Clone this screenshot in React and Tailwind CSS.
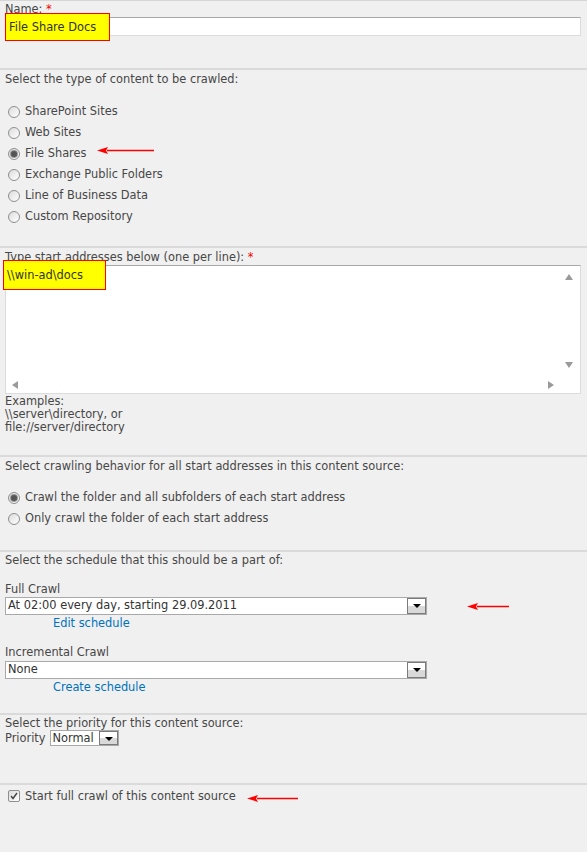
import React from "react";

function Radio({ checked, label }) {
	return (
		<div className="flex h-[21px] items-center pl-[3px]">
			<span className="flex h-[12px] w-[12px] items-center justify-center rounded-full border border-[#8e8f8f] bg-gradient-to-br from-[#dcdcdc] to-white">
				{checked && <span className="h-[6px] w-[6px] rounded-full bg-[#555] ring-1 ring-[#999]" />}
			</span>
			<span className="ml-[5px]">{label}</span>
		</div>
	);
}

function Select({ value, className }) {
	return (
		<div className={`flex items-stretch border border-[#a9a9a9] bg-white ${className}`}>
			<span className="flex-1 overflow-hidden whitespace-nowrap pl-[2px] leading-[15px] text-[#333]">{value}</span>
			<span className="relative w-[19px] border border-[#7a7a7a] bg-[linear-gradient(#fff_50%,#d9d9d9_50%)]">
				<svg className="absolute left-[5px] top-[5px]" width="8" height="4" viewBox="0 0 8 4">
					<path d="M0 0 H8 L4 4 Z" fill="#000" />
				</svg>
			</span>
		</div>
	);
}

function RedArrow({ className, length }) {
	return (
		<svg className={`absolute ${className}`} width={length} height="9" viewBox={`0 0 ${length} 9`}>
			<path d={`M10 4.5 H${length}`} stroke="#ff0000" strokeWidth="1.5" />
			<path d="M0 4.5 L11 1 L9 4.5 L11 8 Z" fill="#ff0000" />
		</svg>
	);
}

export default function App() {
	return (
		<div className="relative w-[587px] bg-white font-['DejaVu_Sans',Verdana,sans-serif] text-[11.4px] leading-[13px] text-[#474747]">
			<div className="bg-[#f0f0f0]">
				{/* Name */}
				<div className="h-[68px] border-t border-[#d6d6d6] px-[5px] pt-[2px]">
					<div>
						Name: <span className="text-[#e00]">*</span>
					</div>
					<div className="relative mt-[1px] h-[19px] w-[576px] border border-[#dcdcdc] border-t-[#a8a8a8] bg-white">
						<div className="absolute -left-[1px] -top-[5px] flex h-[28px] w-[105px] items-center border border-[#ff0000] bg-[#ffff00] pl-[3px] text-[#333]">
							File Share Docs
						</div>
					</div>
				</div>

				{/* Content type */}
				<div className="h-[178px] border-t-2 border-[#dadada] px-[5px] pt-[3px]">
					<div>Select the type of content to be crawled:</div>
					<div className="mt-[15px]">
						<Radio label="SharePoint Sites" />
						<Radio label="Web Sites" />
						<Radio checked label="File Shares" />
						<Radio label="Exchange Public Folders" />
						<Radio label="Line of Business Data" />
						<Radio label="Custom Repository" />
					</div>
				</div>

				{/* Start addresses */}
				<div className="h-[209px] border-t-2 border-[#dadada] px-[5px] pt-[3px]">
					<div>
						Type start addresses below (one per line): <span className="text-[#e00]">*</span>
					</div>
					<div className="relative mt-[1px] h-[129px] w-[576px] border border-[#dcdcdc] border-t-[#a8a8a8] bg-white">
						<div className="absolute -left-[3px] -top-[6px] flex h-[30px] w-[103px] items-center border border-[#ff0000] bg-[#ffff00] pl-[3px] text-[#333]">
							\\win-ad\docs
						</div>
						<svg className="absolute right-[7px] top-[8px]" width="8" height="6" viewBox="0 0 8 6">
							<path d="M4 0 L8 6 H0 Z" fill="#9a9a9a" />
						</svg>
						<svg className="absolute right-[7px] top-[96px]" width="8" height="6" viewBox="0 0 8 6">
							<path d="M0 0 H8 L4 6 Z" fill="#9a9a9a" />
						</svg>
						<svg className="absolute left-[6px] top-[115px]" width="6" height="8" viewBox="0 0 6 8">
							<path d="M6 0 V8 L0 4 Z" fill="#9a9a9a" />
						</svg>
						<svg className="absolute right-[26px] top-[115px]" width="6" height="8" viewBox="0 0 6 8">
							<path d="M0 0 V8 L6 4 Z" fill="#9a9a9a" />
						</svg>
					</div>
					<div className="pt-[1px]">
						<div>Examples:</div>
						<div>\\server\directory, or</div>
						<div>file://server/directory</div>
					</div>
				</div>

				{/* Crawling behavior */}
				<div className="h-[95px] border-t-2 border-[#dadada] px-[5px] pt-[3px]">
					<div>Select crawling behavior for all start addresses in this content source:</div>
					<div className="mt-[14px]">
						<Radio checked label="Crawl the folder and all subfolders of each start address" />
						<Radio label="Only crawl the folder of each start address" />
					</div>
				</div>

				{/* Schedule */}
				<div className="h-[163px] border-t-2 border-[#dadada] px-[5px] pt-[2px]">
					<div>Select the schedule that this should be a part of:</div>
					<div className="mt-[16px]">Full Crawl</div>
					<Select value="At 02:00 every day, starting 29.09.2011" className="mt-[1px] h-[18px] w-[422px]" />
					<div className="pl-[48px] pt-[2px] text-[#0072bc]">Edit schedule</div>
					<div className="mt-[16px]">Incremental Crawl</div>
					<Select value="None" className="mt-[2px] h-[18px] w-[422px]" />
					<div className="pl-[48px] pt-[2px] text-[#0072bc]">Create schedule</div>
				</div>

				{/* Priority */}
				<div className="h-[70px] border-t-2 border-[#dadada] px-[5px] pt-[2px]">
					<div>Select the priority for this content source:</div>
					<div className="flex items-center gap-[4px]">
						<span>Priority</span>
						<Select value="Normal" className="h-[16px] w-[69px]" />
					</div>
				</div>

				{/* Start crawl */}
				<div className="h-[69px] border-t-2 border-[#dadada] px-[8px] pt-[4px]">
					<div className="flex h-[14px] items-center">
						<span className="flex h-[12px] w-[12px] items-center justify-center rounded-[2px] border border-[#8e8f8f] bg-gradient-to-br from-[#dcdcdc] to-white">
							<svg width="8" height="8" viewBox="0 0 8 8">
								<path d="M1 4 L3 6.5 L7 1" stroke="#444" strokeWidth="1.4" fill="none" />
							</svg>
						</span>
						<span className="ml-[5px]">Start full crawl of this content source</span>
					</div>
				</div>
			</div>
			<div className="h-[6px]" />

			<RedArrow className="left-[97px] top-[146px]" length={57} />
			<RedArrow className="left-[467px] top-[602px]" length={42} />
			<RedArrow className="left-[247px] top-[794px]" length={51} />
		</div>
	);
}
